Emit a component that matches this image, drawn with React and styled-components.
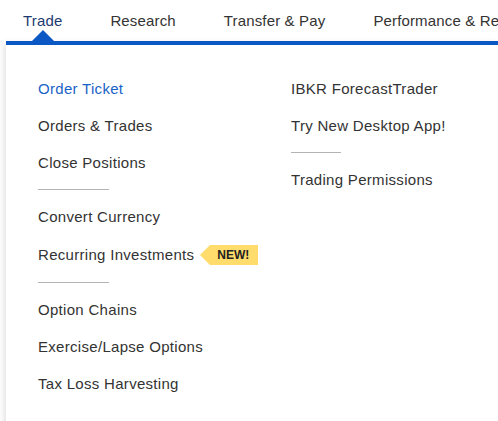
import React from 'react'
import styled, { createGlobalStyle } from 'styled-components'

const GlobalStyle = createGlobalStyle`
  body {
    margin: 0;
    background: #fff;
    font-family: 'Liberation Sans', Arial, sans-serif;
    color: #333;
    overflow: hidden;
  }
`

const navItems = ['Trade', 'Research', 'Transfer & Pay', 'Performance & Reports']

const columns = [
  [
    { label: 'Order Ticket', active: true },
    { label: 'Orders & Trades' },
    { label: 'Close Positions' },
    { divider: true },
    { label: 'Convert Currency' },
    { label: 'Recurring Investments', badge: 'NEW!' },
    { divider: true },
    { label: 'Option Chains' },
    { label: 'Exercise/Lapse Options' },
    { label: 'Tax Loss Harvesting' }
  ],
  [
    { label: 'IBKR ForecastTrader' },
    { label: 'Try New Desktop App!' },
    { divider: true, short: true },
    { label: 'Trading Permissions' }
  ]
]

const App = () => {
  return (
    <Page>
      <GlobalStyle />
      <NavBar>
        {navItems.map((item, i) => (
          <NavItem key={item} $active={i === 0}>
            {item}
          </NavItem>
        ))}
      </NavBar>
      <Dropdown>
        {columns.map((col, c) => (
          <Column key={c} $wide={c === 0}>
            {col.map((entry, i) =>
              entry.divider ? (
                <Divider key={i} $short={entry.short} />
              ) : (
                <MenuItem key={i} $active={entry.active} $tall={!!entry.badge}>
                  {entry.label}
                  {entry.badge && <Badge>{entry.badge}</Badge>}
                </MenuItem>
              )
            )}
          </Column>
        ))}
      </Dropdown>
    </Page>
  )
}

const Page = styled.div`
  width: 498px;
  height: 421px;
  overflow: hidden;
`

const NavBar = styled.nav`
  display: flex;
  gap: 48px;
  height: 41px;
  padding-left: 23px;
  white-space: nowrap;
`

const NavItem = styled.div`
  position: relative;
  font-size: 15px;
  letter-spacing: 0.15px;
  line-height: 41px;
  color: ${({ $active }) => ($active ? '#1d3b70' : '#333')};

  ${({ $active }) =>
    $active &&
    `
    &::after {
      content: '';
      position: absolute;
      left: 50%;
      bottom: 0;
      margin-left: -11px;
      border-left: 11px solid transparent;
      border-right: 11px solid transparent;
      border-bottom: 11px solid #0b58c4;
    }
  `}
`

const Dropdown = styled.div`
  display: flex;
  margin-left: 6px;
  height: 380px;
  padding: 25px 0 0 32px;
  background: #fff;
  border-top: 4px solid #0b58c4;
  box-shadow: -2px 2px 6px rgba(0, 0, 0, 0.12);
`

const Column = styled.div`
  display: flex;
  flex-direction: column;
  width: ${({ $wide }) => ($wide ? '253px' : 'auto')};
`

const MenuItem = styled.div`
  display: flex;
  align-items: center;
  height: ${({ $tall }) => ($tall ? '39px' : '37px')};
  font-size: 15px;
  letter-spacing: 0.3px;
  white-space: nowrap;
  color: ${({ $active }) => ($active ? '#1a64c6' : '#333')};
`

const Divider = styled.div`
  width: ${({ $short }) => ($short ? '50px' : '71px')};
  height: 1px;
  margin: 8px 0 8px;
  background: #b3b3b3;
`

const Badge = styled.span`
  position: relative;
  margin-left: 16px;
  padding: 0 9px 0 7px;
  height: 20px;
  line-height: 20px;
  font-size: 12px;
  font-weight: 600;
  letter-spacing: 0;
  color: #222;
  background: #ffdc6b;

  &::before {
    content: '';
    position: absolute;
    left: -10px;
    top: 0;
    border-top: 10px solid transparent;
    border-bottom: 10px solid transparent;
    border-right: 10px solid #ffdc6b;
  }
`

export default App
